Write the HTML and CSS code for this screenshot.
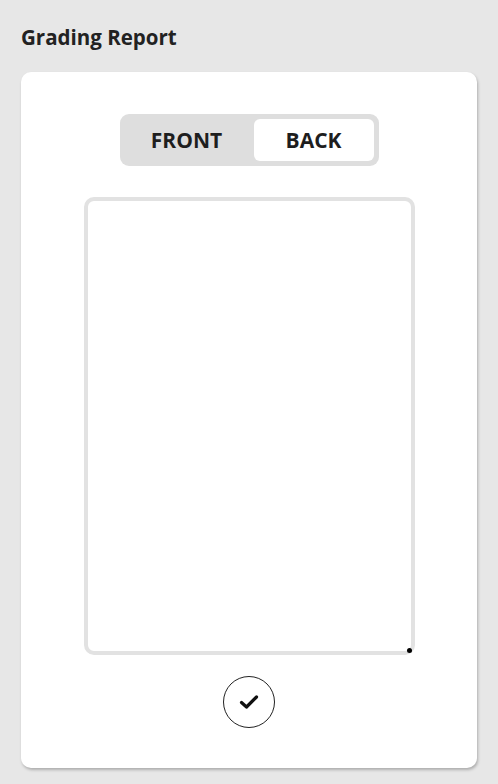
FILE: index.html
```html
<!DOCTYPE html>
<html>
<head>
<meta charset="utf-8">
<link rel="stylesheet" href="styles.css">
</head>
<body>
<div class="page">
  <h1 class="title">Grading Report</h1>
  <div class="card">
    <div class="toggle">
      <div class="seg">FRONT</div>
      <div class="seg active">BACK</div>
    </div>
    <div class="preview">
      <span class="dot"></span>
    </div>
    <button class="confirm" aria-label="confirm">
      <svg width="20" height="16" viewBox="0 0 20 16"><path d="M2.5 8.5 L7.5 13 L17.5 3" fill="none" stroke="#111" stroke-width="3.2" stroke-linecap="round" stroke-linejoin="round"/></svg>
    </button>
  </div>
</div>
</body>
</html>
```
FILE: styles.css
```css
html, body { margin: 0; padding: 0; }
body {
  background: #e7e7e7;
  font-family: "Open Sans", "Noto Sans", sans-serif;
  width: 498px;
  height: 784px;
  overflow: hidden;
}
.page {
  padding: 23px 21px 0 21px;
}
.title {
  margin: 0;
  font-size: 20.5px;
  font-weight: 700;
  color: #222;
  line-height: 28px;
  letter-spacing: 0;
}
.card {
  margin-top: 21px;
  width: 456px;
  height: 696px;
  box-sizing: border-box;
  background: #fff;
  border-radius: 10px;
  box-shadow: 1px 2px 3px rgba(0,0,0,0.25);
  display: flex;
  flex-direction: column;
  align-items: center;
  padding-top: 42px;
}
.toggle {
  width: 259px;
  height: 52px;
  box-sizing: border-box;
  background: #dedede;
  border-radius: 9px;
  padding: 5px 5px 5px 0;
  display: flex;
}
.seg {
  flex: 1;
  display: flex;
  align-items: center;
  justify-content: center;
  font-size: 21px;
  font-weight: 700;
  color: #1e1e1e;
}
.seg.active {
  background: #fff;
  border-radius: 6px;
  flex: 0 0 120px;
}
.preview {
  position: relative;
  margin-top: 31px;
  width: 331px;
  height: 458px;
  box-sizing: border-box;
  border: 4px solid #e2e2e2;
  border-radius: 10px;
}
.dot {
  position: absolute;
  right: -1px;
  bottom: -2px;
  width: 5px;
  height: 5px;
  border-radius: 50%;
  background: #000;
}
.confirm {
  margin-top: 21px;
  width: 52px;
  height: 52px;
  border-radius: 50%;
  border: 1.5px solid #222;
  background: #fff;
  padding: 0;
  display: flex;
  align-items: center;
  justify-content: center;
}
```
